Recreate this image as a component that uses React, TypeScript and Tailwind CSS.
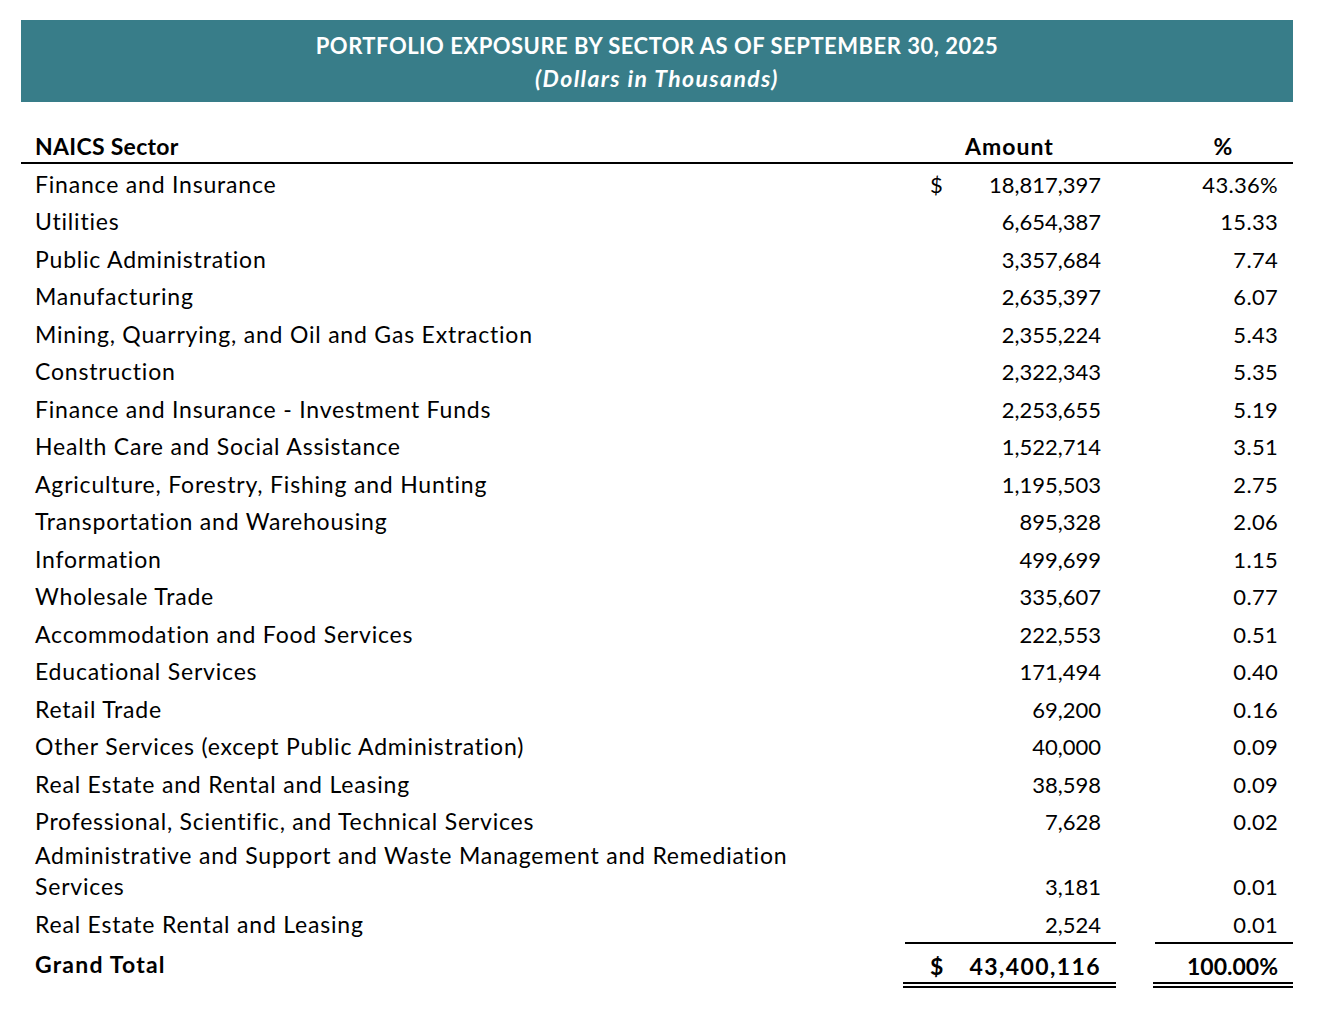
const rows: { name: string; amount: string; pct: string; dollar?: boolean; tall?: boolean }[] = [
  { name: "Finance and Insurance", amount: "18,817,397", pct: "43.36%", dollar: true },
  { name: "Utilities", amount: "6,654,387", pct: "15.33" },
  { name: "Public Administration", amount: "3,357,684", pct: "7.74" },
  { name: "Manufacturing", amount: "2,635,397", pct: "6.07" },
  { name: "Mining, Quarrying, and Oil and Gas Extraction", amount: "2,355,224", pct: "5.43" },
  { name: "Construction", amount: "2,322,343", pct: "5.35" },
  { name: "Finance and Insurance - Investment Funds", amount: "2,253,655", pct: "5.19" },
  { name: "Health Care and Social Assistance", amount: "1,522,714", pct: "3.51" },
  { name: "Agriculture, Forestry, Fishing and Hunting", amount: "1,195,503", pct: "2.75" },
  { name: "Transportation and Warehousing", amount: "895,328", pct: "2.06" },
  { name: "Information", amount: "499,699", pct: "1.15" },
  { name: "Wholesale Trade", amount: "335,607", pct: "0.77" },
  { name: "Accommodation and Food Services", amount: "222,553", pct: "0.51" },
  { name: "Educational Services", amount: "171,494", pct: "0.40" },
  { name: "Retail Trade", amount: "69,200", pct: "0.16" },
  { name: "Other Services (except Public Administration)", amount: "40,000", pct: "0.09" },
  { name: "Real Estate and Rental and Leasing", amount: "38,598", pct: "0.09" },
  { name: "Professional, Scientific, and Technical Services", amount: "7,628", pct: "0.02" },
  {
    name: "Administrative and Support and Waste Management and Remediation Services",
    amount: "3,181",
    pct: "0.01",
    tall: true,
  },
  { name: "Real Estate Rental and Leasing", amount: "2,524", pct: "0.01" },
];

const cols = "grid grid-cols-[882px_213px_37px_140px]";

export default function App() {
  return (
    <div className="min-h-screen bg-white pt-5 px-[21px] font-['Lato','Open_Sans',sans-serif] text-[22px] text-black">
      <div className="w-[1272px]">
        {/* Banner */}
        <div className="h-[82px] bg-[#387d89] flex flex-col items-center justify-center text-white font-bold leading-[33px] pt-[1px]">
          <div className="text-[22px] tracking-[0.5px]">PORTFOLIO EXPOSURE BY SECTOR AS OF SEPTEMBER 30, 2025</div>
          <div className="text-[23px] italic tracking-[1.4px]">(Dollars in Thousands)</div>
        </div>

        {/* Header */}
        <div className={`${cols} h-[62px] items-end border-b-2 border-black font-bold leading-[31px]`}>
          <div className="pl-[14px] text-[23px] tracking-[0.3px]">NAICS Sector</div>
          <div className="text-center text-[23px] tracking-[1px]">Amount</div>
          <div />
          <div className="text-center text-[23px]">%</div>
        </div>

        {/* Body */}
        {rows.map((r) => (
          <div
            key={r.name}
            className={`${cols} items-end leading-[31px] pb-[2px] ${r.tall ? "h-[65px]" : "h-[37.5px]"}`}
          >
            <div className="pl-[14px] pr-[60px] text-[23px] tracking-[0.8px]">{r.name}</div>
            <div className="flex justify-between pl-[27px] pr-[15px]">
              <span>{r.dollar ? "$" : ""}</span>
              <span>{r.amount}</span>
            </div>
            <div />
            <div className="text-right pr-[15px] tracking-[0.3px]">{r.pct}</div>
          </div>
        ))}

        {/* Grand total */}
        <div className={`${cols} font-bold`}>
          <div className="pl-[14px] pt-[7px] leading-[31px] text-[23px] tracking-[1.2px]">Grand Total</div>
          <div>
            <div className="border-t-2 border-black ml-[2px] flex justify-between pl-[25px] pr-[15px] pt-[7px] leading-[31px] text-[23px]">
              <span>$</span>
              <span className="tracking-[1.4px]">43,400,116</span>
            </div>
            <div className="h-[6px] border-y-2 border-black" />
          </div>
          <div />
          <div>
            <div className="border-t-2 border-black ml-[2px] text-right pr-[15px] pt-[7px] leading-[31px] text-[23px]">
              100.00%
            </div>
            <div className="h-[6px] border-y-2 border-black" />
          </div>
        </div>
      </div>
    </div>
  );
}
